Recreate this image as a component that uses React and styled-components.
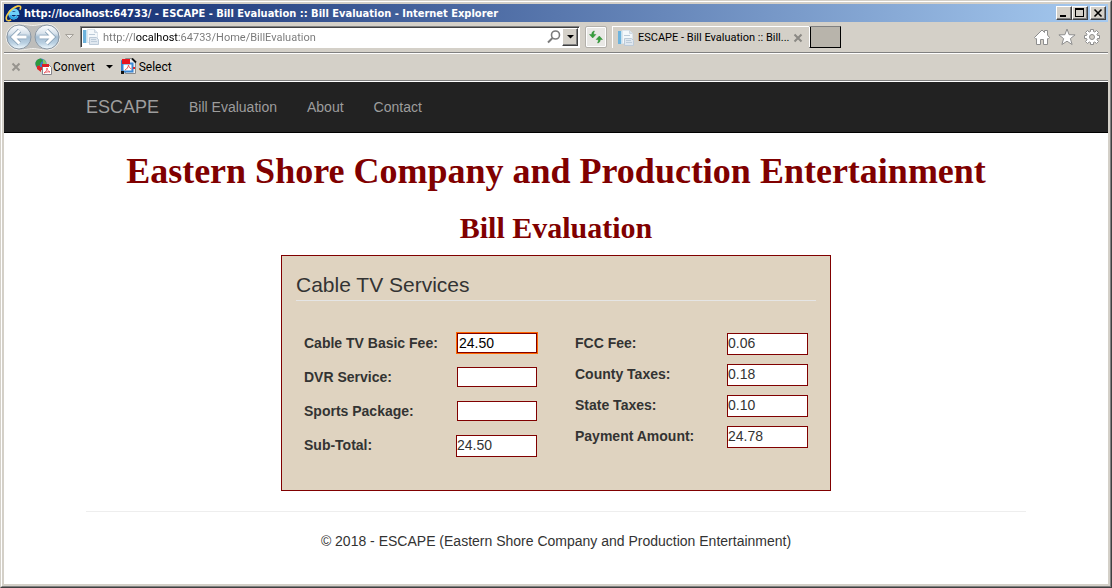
import { useId } from "react"
import styled, { createGlobalStyle, css } from "styled-components"

const leftFields = [
    { label: "Cable TV Basic Fee:", value: "24.50", focused: true },
    { label: "DVR Service:", value: "" },
    { label: "Sports Package:", value: "" },
    { label: "Sub-Total:", value: "24.50", result: true },
]

const rightFields = [
    { label: "FCC Fee:", value: "0.06", result: true },
    { label: "County Taxes:", value: "0.18", result: true },
    { label: "State Taxes:", value: "0.10", result: true },
    { label: "Payment Amount:", value: "24.78", result: true },
]

const IeLogo = () => (
    <svg width="17" height="17" viewBox="0 0 17 17" fill="none">
        <path d="M12.300 10.800a4.100 4.100 0 1 1 .500-2.300H5" stroke="#6fd0f8" strokeWidth="3" />
        <path d="M12.300 11.200a4.100 4.100 0 0 1-7.400-.800" stroke="#2ba3e3" strokeWidth="2" />
        <path d="M2.200 15.400C-.400 13.500 2.500 7.500 7.500 3.700 11.200 1 14.800.200 15.500 1.700c.4.900 0 2-.7 3.100" stroke="#f9cf45" strokeWidth="1.600" />
        <path d="M2.200 15.400c1.100.6 2.600.200 4-.6" stroke="#f9cf45" strokeWidth="1.400" />
    </svg>
)

const NavArrows = () => (
    <svg width="56" height="28" viewBox="0 0 56 28">
        <defs>
            <linearGradient id="orb" x1="0" y1="0" x2="0" y2="1">
                <stop offset="0" stopColor="#fdfeff" />
                <stop offset=".35" stopColor="#d9e3ec" />
                <stop offset=".5" stopColor="#a4bdd2" />
                <stop offset=".75" stopColor="#b9d0e2" />
                <stop offset="1" stopColor="#f4fcff" />
            </linearGradient>
        </defs>
        <path d="M14 1C21 1 23 2.500 28 2.500S35 1 42 1a13 13 0 0 1 0 26C35 27 33 25.500 28 25.500S21 27 14 27A13 13 0 0 1 14 1Z" fill="#bdbdbb" stroke="#efeeeb" />
        <circle cx="14" cy="14" r="12" fill="url(#orb)" stroke="#8b98a5" />
        <circle cx="42" cy="14" r="12" fill="url(#orb)" stroke="#8b98a5" />
        <g fill="none" strokeLinejoin="miter">
            <path d="M14.500 7.500L8 14l6.500 6.500M8.500 14H21.500M41.500 7.500L48 14l-6.500 6.500M47.500 14H34.500" stroke="#8ca5ba" strokeWidth="4.600" />
            <path d="M14.500 7.500L8 14l6.500 6.500M8.500 14H21.500M41.500 7.500L48 14l-6.500 6.500M47.500 14H34.500" stroke="#fff" strokeWidth="3" />
        </g>
    </svg>
)

const PageIcon = () => (
    <svg width="16" height="16" viewBox="0 0 16 16">
        <path d="M0 1h3v13H0Z" fill="#6db3dd" />
        <path d="M3 1h1v13H3Z" fill="#c5e2f2" />
        <path d="M4.500.500h7l3 3v10h-10Z" fill="#f4f8fb" stroke="#dde5ec" />
        <path d="M11.500.500v3h3" fill="#dce6ef" stroke="#cdd7e1" />
        <path d="M6.500 8.500h7l2 2v5h-9Z" fill="#dfe7ef" stroke="#bccad8" />
        <path d="M6 5.500h6M8 10.500h5M8 12.500h6" stroke="#bccbd9" />
    </svg>
)

const SearchIcon = () => (
    <svg width="14" height="14" viewBox="0 0 14 14" fill="none" stroke="#7b7b7b">
        <circle cx="8.500" cy="5" r="4" strokeWidth="1.600" />
        <path d="M5.500 8L1 12.500" strokeWidth="2" />
    </svg>
)

const RefreshIcon = () => (
    <svg width="16" height="16" viewBox="0 0 16 16" fill="#35a03a" stroke="#218229" strokeWidth=".400">
        <path d="M6.500 2C4.600 2.200 3.700 3.500 3.700 5.500H1.500L4.700 9 7.900 5.500H5.700C5.700 4 5.800 3 6.500 2Z" />
        <path d="M9.500 14c1.900-.2 2.800-1.500 2.800-3.500h2.200L11.300 7 8.100 10.500h2.200c0 1.500-.1 2.500-.8 3.500Z" />
    </svg>
)

const Caret = ({ hollow }) => (
    <svg width="9" height="6" viewBox="0 0 9 6">
        {hollow ? <path d="M.500.500h8l-4 4Z" fill="#eeece8" stroke="#a6a29b" /> : <path d="M1 1h7L4.500 4.500Z" />}
    </svg>
)

const Cross = ({ color = "#8b8984" }) => (
    <svg width="10" height="10" viewBox="0 0 10 10">
        <path d="M1.500 1.500l7 7M8.500 1.500l-7 7" stroke={color} strokeWidth="2" />
    </svg>
)

const HomeIcon = () => (
    <svg width="18" height="18" viewBox="0 0 18 18" fill="#fff" stroke="#8e8e8e">
        <path d="M9 2l2.500 2.500V2.500h3V7L16.500 9.500l-1 1.200h-1V16.500h-4v-5h-3v5h-4v-5.800h-1L1.500 9.500Z" />
    </svg>
)

const StarIcon = () => (
    <svg width="18" height="18" viewBox="0 0 18 18" fill="#fff" stroke="#8e8e8e">
        <path d="M9 1l2.100 5.700 6 .2-4.700 3.700 1.700 5.900L9 13.200l-5.100 3.300 1.700-5.900L.900 6.900l6-.2Z" />
    </svg>
)

const GearIcon = () => (
    <svg width="18" height="18" viewBox="0 0 18 18" fill="#fff" stroke="#8e8e8e">
        <path d="M7.500 1.500h3v2l1.300.5 1.700-1.500 2 2L14 6.200l.5 1.300h2v3h-2L14 11.800l1.500 1.700-2 2-1.700-1.500-1.300.5v2h-3v-2L6.200 14l-1.700 1.500-2-2L4 11.800l-.5-1.300h-2v-3h2L4 6.200 2.500 4.500l2-2L6.200 4l1.300-.5Z" />
        <circle cx="9" cy="9" r="2.500" fill="#d4d0c8" />
    </svg>
)

const PdfSheet = ({ x = 0, y = 0 }) => (
    <g transform={`translate(${x} ${y})`}>
        <path d="M.500.500h6l3 3v7h-9Z" fill="#fff" stroke="#85858c" />
        <path d="M0 0h7v3H0Z" fill="#dc1f27" />
        <path d="M2 9c2-1 3-3 3-5 0 2 1 3 3 4-2-.4-4 0-6 1Z" fill="none" stroke="#e8555a" strokeWidth=".900" />
    </g>
)

const ConvertIcon = () => (
    <svg width="17" height="17" viewBox="0 0 17 17">
        <circle cx="6" cy="6" r="5.600" fill="#3f7fc4" />
        <path d="M.500 4.500C1.500 2 4 .400 6 .500L8 3 6 4l-1 3-2 1-1 1C1 8 .300 6 .500 4.500Z" fill="#2f9a3d" />
        <path d="M8 1c2 1 3.500 3 3.500 5L8 6Z" fill="#83c667" />
        <path d="M2 8v3l4 3v-2h2V9H5V7.500Z" fill="#e12728" />
        <PdfSheet x={7} y={6} />
    </svg>
)

const SelectIcon = () => (
    <svg width="17" height="17" viewBox="0 0 17 17">
        <path d="M.500 2.500h11v11H.500Z" fill="#d9e9f7" stroke="#397dc4" />
        <path d="M4.500.500h7l3 3v12h-10Z" fill="#eee" stroke="#8b8b8b" />
        <path d="M11 .500l4 4" stroke="#111" strokeWidth="1.800" />
        <path d="M1.500 5.500h10v8h-10Z" fill="#fff" stroke="#3a87d4" strokeWidth="2" />
        <path d="M1 1h8v5H1Z" fill="#e8141f" />
        <path d="M4 12c2-1 3-2.500 3.500-5 .5 2 1 3 3 4" fill="none" stroke="#e8555a" />
        <path d="M0 13h3v3H0Z" fill="#111" />
        <path d="M12 9h2v2h-2Z" fill="#e0242c" />
    </svg>
)

const Field = ({ label, value, focused, result }) => {
    const id = useId()
    return (
        <FieldRow>
            <label htmlFor={id}>{label}</label>
            <FieldInput id={id} type="text" defaultValue={value} readOnly={result} $result={result} $focused={focused} />
        </FieldRow>
    )
}

const App = () => {
    return (
        <Frame>
            <GlobalStyle />
            <Bevel>
                <TitleBar>
                    <IeLogo />
                    <span>http://localhost:64733/ - ESCAPE - Bill Evaluation :: Bill Evaluation - Internet Explorer</span>
                    <WindowButtons>
                        <CaptionButton aria-label="Minimize">
                            <svg width="12" height="10"><path d="M2 7h6v2H2Z" /></svg>
                        </CaptionButton>
                        <CaptionButton aria-label="Maximize">
                            <svg width="12" height="10"><path d="M1 0h9v9H1ZM2 2v6h7V2Z" fillRule="evenodd" /></svg>
                        </CaptionButton>
                        <CaptionButton aria-label="Close" $apart>
                            <svg width="12" height="10"><path d="M2.500 1.500l7 7M9.500 1.500l-7 7" stroke="#000" strokeWidth="1.600" /></svg>
                        </CaptionButton>
                    </WindowButtons>
                </TitleBar>

                <AddressRow>
                    <PlainButton aria-label="Back and forward"><NavArrows /></PlainButton>
                    <HistoryButton aria-label="Recent pages"><Caret hollow /></HistoryButton>
                    <AddressBox>
                        <PageIcon />
                        <AddressInput aria-label="Address" type="text" defaultValue="http://localhost:64733/Home/BillEvaluation" />
                        <PlainButton aria-label="Search"><SearchIcon /></PlainButton>
                        <DropButton aria-label="Show address list"><Caret /></DropButton>
                    </AddressBox>
                    <RefreshButton aria-label="Refresh"><RefreshIcon /></RefreshButton>
                    <Tab>
                        <PageIcon />
                        <span>ESCAPE - Bill Evaluation :: Bill...</span>
                        <PlainButton aria-label="Close tab"><Cross /></PlainButton>
                    </Tab>
                    <NewTab aria-label="New tab" />
                    <Tools>
                        <PlainButton aria-label="Home"><HomeIcon /></PlainButton>
                        <PlainButton aria-label="Favorites"><StarIcon /></PlainButton>
                        <PlainButton aria-label="Tools"><GearIcon /></PlainButton>
                    </Tools>
                </AddressRow>

                <CommandRow>
                    <PlainButton aria-label="Close toolbar"><Cross color="#97948e" /></PlainButton>
                    <ConvertButton><ConvertIcon />Convert</ConvertButton>
                    <MenuArrow aria-label="Convert options"><Caret /></MenuArrow>
                    <CommandButton><SelectIcon />Select</CommandButton>
                </CommandRow>

                <Page>
                    <NavBar>
                        <NavInner>
                            <Brand href="#">ESCAPE</Brand>
                            <NavLink href="#">Bill Evaluation</NavLink>
                            <NavLink href="#">About</NavLink>
                            <NavLink href="#">Contact</NavLink>
                        </NavInner>
                    </NavBar>
                    <Content>
                        <CompanyName>Eastern Shore Company and Production Entertainment</CompanyName>
                        <FormTitle>Bill Evaluation</FormTitle>
                        <Panel>
                            <PanelHeading>Cable TV Services</PanelHeading>
                            <Columns>
                                <Column $gap={12}>
                                    {leftFields.map((field) => <Field key={field.label} {...field} />)}
                                </Column>
                                <Column $gap={9}>
                                    {rightFields.map((field) => <Field key={field.label} {...field} />)}
                                </Column>
                            </Columns>
                        </Panel>
                        <Footer>© 2018 - ESCAPE (Eastern Shore Company and Production Entertainment)</Footer>
                    </Content>
                </Page>
            </Bevel>
        </Frame>
    )
}

export default App

const GlobalStyle = createGlobalStyle`
*{
    box-sizing: border-box;
}
body{
    margin: 0;
}
svg{
    display: block;
    flex-shrink: 0;
}
button{
    font: inherit;
    color: inherit;
}
`
const Frame = styled.div`
display: flex;
min-height: 100vh;
border: 1px solid;
border-color: #d4d0c8 #404040 #404040 #d4d0c8;
`
const Bevel = styled.div`
flex: 1;
min-width: 0;
display: flex;
flex-direction: column;
padding: 2px;
background: #d4d0c8;
border: 1px solid;
border-color: #fff #808080 #808080 #fff;
font-family: Tahoma, Roboto, sans-serif;
font-size: 12px;
color: #000;
`
const TitleBar = styled.div`
display: flex;
align-items: center;
gap: 2px;
height: 18px;
padding: 0 2px 0 1px;
background: linear-gradient(90deg, #0a246a, #a6caf0);
color: #fff;
font-family: "DejaVu Sans Condensed", "DejaVu Sans", sans-serif;
font-size: 11px;
font-weight: bold;
white-space: nowrap;
`
const WindowButtons = styled.div`
display: flex;
margin-left: auto;
`
const raised = css`
background: #d4d0c8;
border: 1px solid;
border-color: #fff #404040 #404040 #fff;
box-shadow: inset -1px -1px 0 #808080;
`
const CaptionButton = styled.button`
width: 16px;
height: 14px;
padding: 1px;
margin-left: ${({ $apart }) => ($apart ? "2px" : "0")};
${raised}
`
const PlainButton = styled.button`
display: flex;
align-items: center;
padding: 0;
border: none;
background: none;
`
const Row = styled.div`
display: flex;
align-items: center;
border-bottom: 1px solid #808080;
box-shadow: 0 1px 0 #fff;
`
const AddressRow = styled(Row)`
height: 31px;
padding: 0 7px 0 1px;
`
const HistoryButton = styled(PlainButton)`
margin: 0 6px 0 4px;
`
const AddressBox = styled.div`
display: flex;
align-items: center;
flex: 0 1 500px;
height: 22px;
padding: 0 1px 0 2px;
background: #fff;
border: 1px solid;
border-color: #808080 #fff #fff #808080;
box-shadow: inset 1px 1px 0 #404040;
`
const AddressInput = styled.input`
flex: 1;
min-width: 0;
padding: 0;
margin-left: 4px;
border: none;
outline: none;
font: inherit;
font-size: 11px;
color: #777;
background: linear-gradient(90deg, #777 33px, #000 33px 76px, #777 76px);
background-clip: text;
-webkit-text-fill-color: transparent;
`
const DropButton = styled.button`
display: flex;
align-items: center;
justify-content: center;
width: 16px;
height: 18px;
padding: 0;
margin-left: 1px;
${raised}
`
const RefreshButton = styled.button`
display: flex;
align-items: center;
justify-content: center;
width: 22px;
height: 22px;
padding: 0;
margin: 0 5px;
background: #e9e8e5;
border: 1px solid #b3b0aa;
border-radius: 2px;
box-shadow: inset 0 0 0 1px #fff;
`
const Tab = styled.div`
display: flex;
align-items: center;
flex: 0 1 197px;
gap: 4px;
height: 22px;
padding: 0 6px 0 5px;
border-top: 1px solid #fff;
border-left: 1px solid #fff;
white-space: nowrap;
font-size: 11px;

span{
    flex: 1;
}
`
const NewTab = styled.button`
width: 32px;
height: 22px;
padding: 0;
background: #b8b4ab;
border: 1px solid;
border-color: #808080 #000 #000 #fff;
box-shadow: inset 1px 0 0 #000;
`
const Tools = styled.div`
display: flex;
gap: 7px;
margin-left: auto;
`
const CommandRow = styled(Row)`
height: 28px;
padding: 0 7px;
margin-bottom: 1px;
`
const CommandButton = styled(PlainButton)`
gap: 1px;
`
const ConvertButton = styled(CommandButton)`
margin-left: 14px;
`
const MenuArrow = styled(PlainButton)`
margin: 0 7px 0 10px;
`
const Page = styled.div`
flex: 1;
background: #fff;
font-family: "Liberation Sans", Arial, sans-serif;
font-size: 14px;
line-height: 20px;
color: #333;
`
const NavBar = styled.nav`
background: #222;
border-bottom: 1px solid #000;
`
const NavInner = styled.div`
display: flex;
align-items: center;
gap: 30px;
max-width: 940px;
height: 50px;
margin: 0 auto;
`
const NavLink = styled.a`
color: #9d9d9d;
text-decoration: none;
`
const Brand = styled(NavLink)`
font-size: 18px;
`
const Content = styled.main`
max-width: 940px;
margin: 0 auto;
padding-top: 18px;
`
const Heading = styled.h1`
margin: 0;
font-family: "Liberation Serif", "Times New Roman", serif;
font-weight: bold;
text-align: center;
color: maroon;
`
const CompanyName = styled(Heading)`
font-size: 36px;
line-height: 40px;
`
const FormTitle = styled(Heading).attrs({ as: "h2" })`
margin: 20px 0 11px;
font-size: 30px;
line-height: 33px;
`
const Panel = styled.form`
max-width: 550px;
margin: 0 auto;
padding: 14px 14px 33px;
border: 1px solid maroon;
background: #dfd3c0;
`
const PanelHeading = styled.h3`
margin: 0 0 32px;
font-size: 21px;
font-weight: normal;
line-height: 30px;
border-bottom: 1px solid #e5e5e5;
`
const Columns = styled.div`
display: flex;
justify-content: space-between;
padding: 0 8px;
`
const Column = styled.div`
display: flex;
flex-direction: column;
flex: 0 1 233px;
gap: ${({ $gap }) => $gap}px;
`
const FieldRow = styled.div`
display: flex;
justify-content: space-between;
height: 22px;

label{
    font-weight: bold;
}
`
const FieldInput = styled.input`
width: ${({ $result }) => ($result ? "81px" : "80px")};
height: ${({ $result }) => ($result ? "22px" : "20px")};
padding: ${({ $result }) => ($result ? "0 0 2px" : "0 1px 1px")};
border: 1px solid maroon;
border-radius: 0;
outline: ${({ $focused }) => ($focused ? "1px solid #ff6600" : "none")};
background: #fff;
font: inherit;
color: ${({ $result }) => ($result ? "#333" : "#000")};
`
const Footer = styled.footer`
margin-top: 20px;
padding: 19px 0 20px;
border-top: 1px solid #eee;
text-align: center;
`
